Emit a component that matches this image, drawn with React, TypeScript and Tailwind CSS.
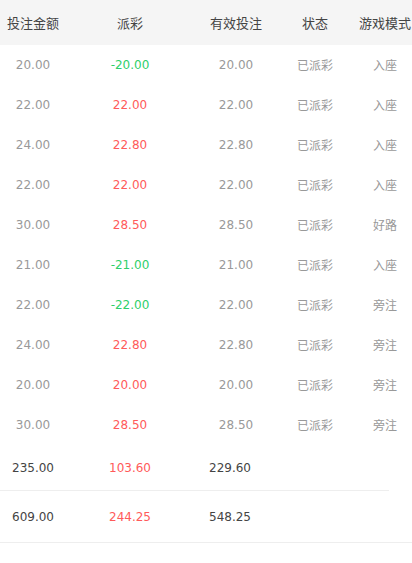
const rows = [
  { bet: "20.00", win: "-20.00", valid: "20.00", mode: "入座" },
  { bet: "22.00", win: "22.00", valid: "22.00", mode: "入座" },
  { bet: "24.00", win: "22.80", valid: "22.80", mode: "入座" },
  { bet: "22.00", win: "22.00", valid: "22.00", mode: "入座" },
  { bet: "30.00", win: "28.50", valid: "28.50", mode: "好路" },
  { bet: "21.00", win: "-21.00", valid: "21.00", mode: "入座" },
  { bet: "22.00", win: "-22.00", valid: "22.00", mode: "旁注" },
  { bet: "24.00", win: "22.80", valid: "22.80", mode: "旁注" },
  { bet: "20.00", win: "20.00", valid: "20.00", mode: "旁注" },
  { bet: "30.00", win: "28.50", valid: "28.50", mode: "旁注" },
];

const cols = "grid grid-cols-[66px_128px_84px_74px_66px]";
const num = "font-['DejaVu_Sans',sans-serif]";

export default function App() {
  return (
    <div
      className="w-[412px] h-[563px] overflow-hidden bg-white"
      style={{ fontFamily: '"Noto Sans CJK SC", "Noto Sans", sans-serif' }}
    >
      <div className={`${cols} h-[45px] items-center bg-[#f5f5f5] text-[13px] text-[#444] text-center`}>
        <div className="whitespace-nowrap">投注金额</div>
        <div>派彩</div>
        <div className="whitespace-nowrap">有效投注</div>
        <div>状态</div>
        <div className="whitespace-nowrap">游戏模式</div>
      </div>

      {rows.map((r, i) => (
        <div key={i} className={`${cols} h-[40px] items-center text-[12px] text-[#999] text-center`}>
          <div className={num}>{r.bet}</div>
          <div className={`${num} ${r.win.startsWith("-") ? "text-[#2ecf6a]" : "text-[#ff5a5a]"}`}>{r.win}</div>
          <div className={num}>{r.valid}</div>
          <div>已派彩</div>
          <div>{r.mode}</div>
        </div>
      ))}

      <div className={`grid grid-cols-[66px_128px_72px] w-[389px] h-[46px] items-center border-b border-[#eeeeee] text-[12px] text-[#444] text-center ${num}`}>
        <div>235.00</div>
        <div className="text-[#ff5a5a]">103.60</div>
        <div>229.60</div>
      </div>
      <div className={`grid grid-cols-[66px_128px_72px] h-[52px] items-center border-b border-[#eeeeee] text-[12px] text-[#444] text-center ${num}`}>
        <div>609.00</div>
        <div className="text-[#ff5a5a]">244.25</div>
        <div>548.25</div>
      </div>
    </div>
  );
}
